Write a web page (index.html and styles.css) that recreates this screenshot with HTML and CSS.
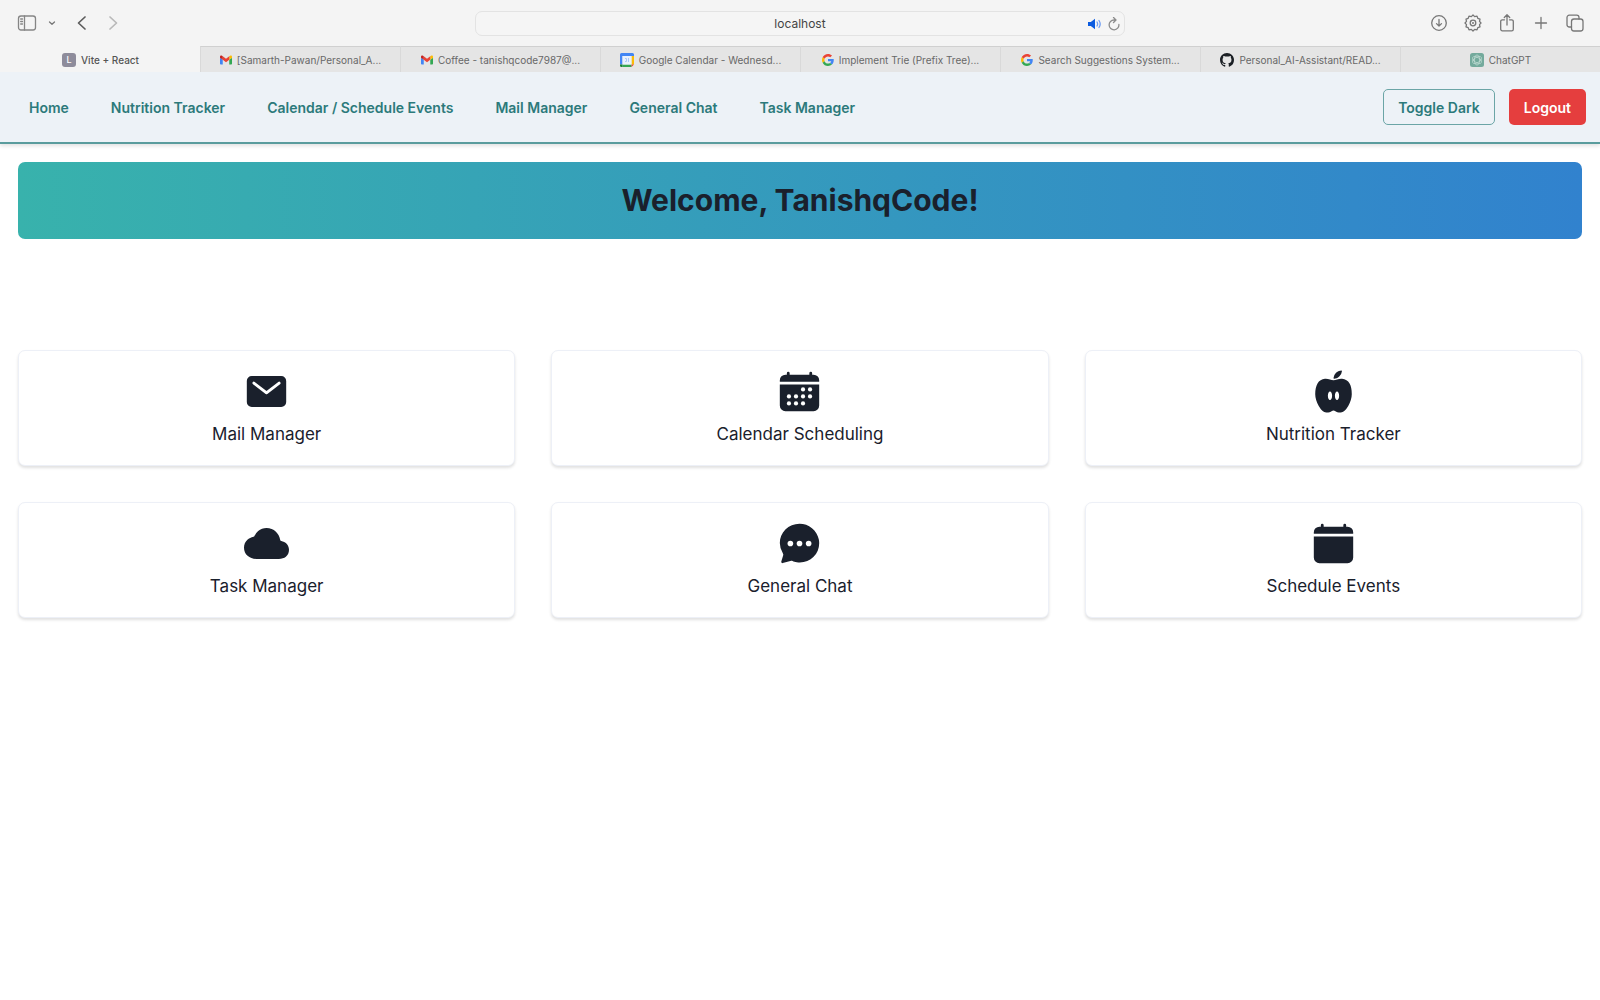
FILE: index.html
```html
<!DOCTYPE html>
<html lang="en">
<head>
<meta charset="utf-8">
<meta name="viewport" content="width=device-width, initial-scale=1">
<title>Vite + React</title>
<link rel="stylesheet" href="styles.css">
</head>
<body>
<svg class="defs" aria-hidden="true">
  <symbol id="gmail" viewBox="0 0 24 18">
    <path fill="#4285f4" d="M1.6 18H5.5V8.7L0 4.6v11.8C0 17.300.7 18 1.600 18z"/>
    <path fill="#34a853" d="M18.500 18h3.900c.9 0 1.600-.7 1.600-1.600V4.600l-5.500 4.100z"/>
    <path fill="#fbbc04" d="M18.500 1.700v7L24 4.600V2.500c0-2-2.300-3.200-3.900-2z"/>
    <path fill="#ea4335" d="M5.500 8.700v-7L12 6.500l6.500-4.800v7L12 13.600z"/>
    <path fill="#c5221f" d="M0 2.500v2.100l5.500 4.100v-7L3.900.5C2.300-.7 0 .5 0 2.500z"/>
  </symbol>
  <symbol id="google" viewBox="0 0 48 48">
    <path fill="#ea4335" d="M24 9.500c3.540 0 6.710 1.220 9.210 3.600l6.850-6.850C35.900 2.380 30.470 0 24 0 14.620 0 6.510 5.380 2.560 13.220l7.980 6.190C12.430 13.720 17.740 9.500 24 9.500z"/>
    <path fill="#4285f4" d="M46.980 24.550c0-1.570-.15-3.090-.38-4.550H24v9.020h12.940c-.58 2.960-2.260 5.480-4.780 7.180l7.730 6c4.510-4.180 7.090-10.360 7.090-17.650z"/>
    <path fill="#fbbc05" d="M10.530 28.590A14.500 14.500 0 0 1 9.770 24c0-1.600.27-3.140.76-4.590l-7.980-6.190A23.900 23.900 0 0 0 0 24c0 3.880.92 7.540 2.560 10.780z"/>
    <path fill="#34a853" d="M24 48c6.480 0 11.930-2.130 15.890-5.810l-7.730-6C30 37.640 27.240 38.490 24 38.490c-6.260 0-11.570-4.220-13.470-9.910l-7.980 6.190C6.510 42.620 14.620 48 24 48z"/>
  </symbol>
</svg>

<header class="browser">
  <div class="toolbar">
    <div class="tools tools-left">
      <button class="tool sidebar" aria-label="Show sidebar">
        <svg width="20" height="20" viewBox="0 0 20 20"><rect x="1.500" y="3" width="17" height="14" rx="2.500"/><path d="M7.500 3v14M3.700 6h1.800M3.700 8.500h1.800M3.700 11h1.800"/></svg>
      </button>
      <button class="tool caret" aria-label="Tab groups">
        <svg width="8" height="8" viewBox="0 0 8 8"><path d="M1.500 3 4 5.300 6.500 3"/></svg>
      </button>
      <button class="tool back" aria-label="Back">
        <svg width="16" height="16" viewBox="0 0 16 16"><path d="M11 2 4.500 8l6.500 6"/></svg>
      </button>
      <button class="tool forward" aria-label="Forward">
        <svg width="16" height="16" viewBox="0 0 16 16"><path d="M5 2l6.500 6L5 14"/></svg>
      </button>
    </div>
    <div class="address">
      <input class="address-input" type="text" value="localhost" aria-label="Address">
      <div class="address-icons">
        <button class="tool sound" aria-label="Mute">
          <svg width="14" height="12" viewBox="0 0 14 12"><path class="solid" d="M0 4h2.800L7 .8v10.400L2.800 8H0z"/><path d="M9 4q1.300 2 0 4M11 2.500q2.400 3.500 0 7"/></svg>
        </button>
        <button class="tool reload" aria-label="Reload">
          <svg width="12" height="14" viewBox="0 0 12 14"><path d="M10.900 7.500A4.900 4.900 0 1 1 6 3h1.500M5.500.5 8 3 5.500 5.500"/></svg>
        </button>
      </div>
    </div>
    <div class="tools tools-right">
      <button class="tool" aria-label="Downloads">
        <svg width="18" height="18" viewBox="0 0 18 18"><circle cx="9" cy="9" r="7.300"/><path d="M9 5.500v6.500M6.500 9.600 9 12.100l2.500-2.500"/></svg>
      </button>
      <button class="tool" aria-label="Settings">
        <svg width="18" height="18" viewBox="0 0 18 18"><path d="M9 1l1.700 1.600 2.300-.5.800 2.200 2.200.8-.5 2.300L17 9l-1.500 1.600.5 2.300-2.200.8-.8 2.200-2.300-.5L9 17l-1.700-1.600-2.300.5-.8-2.200-2.200-.8.500-2.300L1 9l1.500-1.600L2 5.100l2.200-.8.800-2.200 2.300.5z"/><circle cx="9" cy="9" r="2.800"/><circle cx="9" cy="9" r=".4"/></svg>
      </button>
      <button class="tool" aria-label="Share">
        <svg width="18" height="18" viewBox="0 0 18 18"><path d="M6.500 5.800H4.300a1.600 1.600 0 0 0-1.600 1.600v7.800a1.600 1.600 0 0 0 1.600 1.600h9.400a1.600 1.600 0 0 0 1.600-1.600V7.400a1.600 1.600 0 0 0-1.600-1.600h-2.200M9 11V1M6.300 3.500 9 .8l2.700 2.700"/></svg>
      </button>
      <button class="tool" aria-label="New tab">
        <svg width="18" height="18" viewBox="0 0 18 18"><path d="M9 3.500v11M3.500 9h11"/></svg>
      </button>
      <button class="tool" aria-label="Tab overview">
        <svg width="18" height="18" viewBox="0 0 18 18"><rect x="5.500" y="5" width="11.500" height="12" rx="2.500"/><path d="M5.500 13H3.300A2.300 2.300 0 0 1 1 10.700V3.500a2.300 2.300 0 0 1 2.300-2.300h7.400A2.300 2.300 0 0 1 13 3.500V5"/></svg>
      </button>
    </div>
  </div>
  <div class="tabs">
    <a class="tab active" href="#"><span class="favicon letter">L</span><span>Vite + React</span></a>
    <a class="tab" href="#"><svg class="favicon small"><use href="#gmail"/></svg><span>[Samarth-Pawan/Personal_A...</span></a>
    <a class="tab" href="#"><svg class="favicon small"><use href="#gmail"/></svg><span>Coffee - tanishqcode7987@...</span></a>
    <a class="tab" href="#"><svg class="favicon" viewBox="0 0 14 14"><path fill="#4285f4" d="M1.500 0H12.500A1.500 1.500 0 0 1 14 1.500V3H2.500v8.500H0v-10A1.500 1.500 0 0 1 1.500 0z"/><path fill="#fbbc04" d="M11.500 3H14v8.500h-2.500z"/><path fill="#34a853" d="M2.500 11.500h9V14h-9z"/><path fill="#188038" d="M0 11.500h2.500V14h-1A1.500 1.500 0 0 1 0 12.500z"/><path fill="#ea4335" d="M11.500 11.500H14L11.500 14z"/><path fill="#e9f1fd" d="M2.500 3h9v8.500h-9z"/><path fill="none" stroke="#a9c8f8" d="M5 5.500h1.500v3H5M8.500 5v4"/></svg><span>Google Calendar - Wednesd...</span></a>
    <a class="tab" href="#"><svg class="favicon small"><use href="#google"/></svg><span>Implement Trie (Prefix Tree)...</span></a>
    <a class="tab" href="#"><svg class="favicon small"><use href="#google"/></svg><span>Search Suggestions System...</span></a>
    <a class="tab" href="#"><svg class="favicon" viewBox="0 0 16 16"><path fill="#1b1f24" d="M8 0C3.580 0 0 3.580 0 8c0 3.540 2.290 6.530 5.470 7.590.4.070.55-.17.55-.38 0-.19-.01-.82-.01-1.490-2.010.37-2.530-.49-2.690-.94-.09-.23-.48-.94-.82-1.130-.28-.15-.68-.52-.01-.53.63-.01 1.080.58 1.230.82.72 1.210 1.870.87 2.330.66.070-.52.28-.87.51-1.070-1.780-.2-3.640-.89-3.640-3.950 0-.87.31-1.590.82-2.150-.08-.2-.36-1.020.08-2.120 0 0 .67-.21 2.200.82a7.600 7.600 0 0 1 4 0c1.530-1.040 2.200-.82 2.200-.82.44 1.100.16 1.920.08 2.120.51.56.82 1.270.82 2.150 0 3.070-1.870 3.750-3.650 3.950.29.25.54.73.54 1.480 0 1.070-.01 1.930-.01 2.200 0 .21.15.46.55.38A8 8 0 0 0 16 8c0-4.420-3.580-8-8-8z"/></svg><span>Personal_AI-Assistant/READ...</span></a>
    <a class="tab" href="#"><svg class="favicon" viewBox="0 0 14 14"><rect width="14" height="14" rx="2.500" fill="#74aa9c"/><g fill="none" stroke="#c3ddd5" stroke-width=".7"><ellipse cx="7" cy="7" rx="2.600" ry="5"/><ellipse cx="7" cy="7" rx="2.600" ry="5" transform="rotate(60 7 7)"/><ellipse cx="7" cy="7" rx="2.600" ry="5" transform="rotate(120 7 7)"/></g></svg><span>ChatGPT</span></a>
  </div>
</header>

<nav class="navbar">
  <div class="links">
    <a href="#">Home</a>
    <a href="#">Nutrition Tracker</a>
    <a href="#">Calendar / Schedule Events</a>
    <a href="#">Mail Manager</a>
    <a href="#">General Chat</a>
    <a href="#">Task Manager</a>
  </div>
  <div class="actions">
    <button class="btn btn-outline">Toggle Dark</button>
    <button class="btn btn-danger">Logout</button>
  </div>
</nav>

<main class="page">
  <h1 class="banner">Welcome, TanishqCode!</h1>
  <div class="cards">
    <a class="card" href="#">
      <svg class="card-icon" viewBox="0 0 512 512"><path d="M424 80H88a56.060 56.060 0 0 0-56 56v240a56.060 56.060 0 0 0 56 56h336a56.060 56.060 0 0 0 56-56V136a56.060 56.060 0 0 0-56-56zm-14.180 92.630-144 112a16 16 0 0 1-19.640 0l-144-112a16 16 0 1 1 19.640-25.260L256 251.730l134.180-104.360a16 16 0 0 1 19.640 25.260z"/></svg>
      <span>Mail Manager</span>
    </a>
    <a class="card" href="#">
      <svg class="card-icon" viewBox="0 0 512 512"><path d="M480 128a64 64 0 0 0-64-64h-16V48a16 16 0 0 0-32 0v16H144V48a16 16 0 0 0-32 0v16H96a64 64 0 0 0-64 64v16h448zM32 416a64 64 0 0 0 64 64h320a64 64 0 0 0 64-64V176H32z"/><g fill="#fff"><circle cx="296" cy="232" r="24"/><circle cx="376" cy="232" r="24"/><circle cx="136" cy="312" r="24"/><circle cx="216" cy="312" r="24"/><circle cx="296" cy="312" r="24"/><circle cx="376" cy="312" r="24"/><circle cx="136" cy="392" r="24"/><circle cx="216" cy="392" r="24"/><circle cx="296" cy="392" r="24"/></g></svg>
      <span>Calendar Scheduling</span>
    </a>
    <a class="card" href="#">
      <svg class="card-icon" viewBox="0 0 512 512"><path d="M439 166.290c-18.670-32.570-47.460-50.810-85.570-54.230-20.180-1.800-39 3.370-57.230 8.380C282.050 124.330 268.680 128 256 128s-26-3.680-40.060-7.570c-18.280-5-37.180-10.260-57.430-8.360C122.120 115.480 93 134.180 74.200 166.150 56.820 195.760 48 236.760 48 288c0 40.400 15 90.490 40 134 12.820 22.250 47 74 87.160 74 30.770 0 47.150-9.440 59.110-16.330 8.300-4.780 13.310-7.670 21.690-7.670s13.390 2.890 21.690 7.670C289.650 486.560 306 496 336.800 496c40.170 0 74.340-51.760 87.160-74 25.070-43.500 40-93.590 40-134 .04-54.070-8.140-93.970-24.960-121.710zM216 352c-13.250 0-24-21.490-24-48s10.750-48 24-48 24 21.490 24 48-10.750 48-24 48zm80 0c-13.250 0-24-21.490-24-48s10.750-48 24-48 24 21.490 24 48-10.750 48-24 48z"/><path d="M265.100 111.930c13.160-1.750 37.860-7.830 58.830-28.790a98 98 0 0 0 28-58.200A8 8 0 0 0 343.380 16c-12.710.95-36.760 5.870-58.730 27.850A97.600 97.600 0 0 0 256 103.200a8 8 0 0 0 9.100 8.730z"/></svg>
      <span>Nutrition Tracker</span>
    </a>
    <a class="card" href="#">
      <svg class="card-icon" viewBox="0 0 512 512"><path d="M396 432H136c-36.440 0-70.360-12.570-95.510-35.410C14.380 372.880 0 340 0 304c0-36.580 13.390-68.120 38.720-91.220 18.110-16.530 42.220-28.250 69.180-33.870a16 16 0 0 0 11.370-9.150 156.240 156.240 0 0 1 42.050-56.420C187.760 91.690 220.500 80 256 80a153.570 153.570 0 0 1 107.140 42.900c24.730 23.810 41.500 55.280 49.180 92a16 16 0 0 0 12.120 12.390C470 237.420 512 270.430 512 328c0 33.390-12.240 60.780-35.410 79.230C456.230 423.430 428.370 432 396 432z"/></svg>
      <span>Task Manager</span>
    </a>
    <a class="card" href="#">
      <svg class="card-icon" viewBox="0 0 512 512"><path d="M398 81.840A227.400 227.400 0 0 0 255.820 32C194.900 32 138 55.470 95.460 98.090 54.350 139.330 31.820 193.780 32 251.370a215.660 215.660 0 0 0 35.650 118.760c6.200 9 3.900 15.500 2.200 22L49 462c-2.500 11 5 20 16 17l97.800-27.560s2.300.77 4 1.420 16.330 6.260 31.850 10.600c12.900 3.600 39.740 9 60.770 9 59.650 0 115.350-23.100 156.830-65.060C457.360 366 480 310.420 480 252a213.500 213.500 0 0 0-4.780-45c-10.340-48.620-37.760-92.900-77.220-125.160z"/><g fill="#fff"><circle cx="152" cy="256" r="32"/><circle cx="256" cy="256" r="32"/><circle cx="360" cy="256" r="32"/></g></svg>
      <span>General Chat</span>
    </a>
    <a class="card" href="#">
      <svg class="card-icon" viewBox="0 0 512 512"><path d="M480 128a64 64 0 0 0-64-64h-16V48a16 16 0 0 0-32 0v16H144V48a16 16 0 0 0-32 0v16H96a64 64 0 0 0-64 64v16h448zM32 416a64 64 0 0 0 64 64h320a64 64 0 0 0 64-64V176H32z"/></svg>
      <span>Schedule Events</span>
    </a>
  </div>
</main>
</body>
</html>
```
FILE: styles.css
```css
* { box-sizing: border-box; }

body {
  margin: 0;
  background: #fff;
  color: #1a202c;
  font-family: Inter, "Liberation Sans", sans-serif;
}

a { color: inherit; text-decoration: none; }
button, input { font: inherit; }
.defs { display: none; }

/* Browser window */
.browser { background: #f4f4f4; }

.toolbar {
  display: grid;
  grid-template-columns: 1fr minmax(200px, 650px) 1fr;
  align-items: center;
  height: 46px;
  padding: 0 16px;
}

.tools { display: flex; align-items: center; }
.tools-left { gap: 11px; padding-left: 1px; }
.tools-right { gap: 16px; justify-content: flex-end; }

.tool {
  display: flex;
  padding: 0;
  border: 0;
  background: none;
  color: #777;
}

.tool svg {
  fill: none;
  stroke: currentColor;
  stroke-width: 1.3;
  stroke-linecap: round;
  stroke-linejoin: round;
}

.back { margin-left: 7px; color: #5c5c5c; }
.back svg, .forward svg { stroke-width: 1.7; }
.forward { margin-left: 4px; color: #b9b9b9; }
.sidebar { color: #858585; }

.address {
  display: grid;
  align-items: center;
  margin-top: 1px;
}

.address-input, .address-icons { grid-area: 1 / 1; }

.address-input {
  width: 100%;
  height: 25px;
  padding: 0 60px;
  border: 1px solid #e3e3e3;
  border-radius: 7px;
  background: #f5f5f5;
  color: #444;
  font-size: 12px;
  text-align: center;
}

.address-icons {
  display: flex;
  align-items: center;
  justify-self: end;
  gap: 6px;
  padding-right: 5px;
}

.sound { color: #6f9df2; }
.sound .solid { fill: #0a5be0; stroke: none; }
.reload { color: #8c8c8c; }

.tabs {
  display: grid;
  grid-template-columns: repeat(8, minmax(0, 1fr));
}

.tab {
  display: flex;
  align-items: center;
  justify-content: center;
  gap: 5px;
  height: 26px;
  border-top: 1px solid #d0d0d0;
  border-left: 1px solid #d9d9d9;
  background: #e5e5e5;
  color: #686868;
  font-size: 10px;
  white-space: nowrap;
  overflow: hidden;
}

.tab.active {
  border-color: #f4f4f4;
  background: #f4f4f4;
  color: #555;
  font-weight: 500;
}

.favicon { flex: none; width: 14px; height: 14px; }
.favicon.small { width: 12px; height: 12px; }

.letter {
  border-radius: 3px;
  background: #8e8c9b;
  color: #fff;
  font-size: 9px;
  line-height: 14px;
  text-align: center;
}

/* App navigation */
.navbar {
  display: flex;
  align-items: center;
  justify-content: space-between;
  height: 72px;
  padding: 0 14px 0 29px;
  border-bottom: 2px solid #5a9c9d;
  background: #edf2f7;
  box-shadow: 0 2px 4px rgba(0, 0, 0, .12);
  color: #2c7a7b;
  font-size: 14px;
  font-weight: 600;
}

.links { display: flex; gap: 42px; }
.actions { display: flex; gap: 14px; }

.btn {
  height: 36px;
  padding: 0 14px;
  border: 1px solid transparent;
  border-radius: 5px;
}

.btn-outline { border-color: #6ba5a6; background: transparent; color: #2c7a7b; }
.btn-danger { background: #e53e3e; color: #fff; }

/* Dashboard */
.page { padding: 18px; }

.banner {
  margin: 0;
  padding: 18px;
  border-radius: 7px;
  background: linear-gradient(to right, #38b2ac, #3182ce);
  font-size: 30px;
  font-weight: 700;
  line-height: 41px;
  text-align: center;
}

.cards {
  display: grid;
  grid-template-columns: repeat(3, minmax(0, 1fr));
  gap: 36px;
  margin-top: 111px;
}

.card {
  display: flex;
  flex-direction: column;
  align-items: center;
  gap: 7px;
  padding: 18px;
  border: 1px solid #edf0f7;
  border-radius: 7px;
  background: #fff;
  box-shadow: 0 2px 3px rgba(0, 0, 0, .12);
  font-size: 17px;
  line-height: 26px;
}

.card-icon { width: 45px; height: 45px; fill: #1a202c; }
```
